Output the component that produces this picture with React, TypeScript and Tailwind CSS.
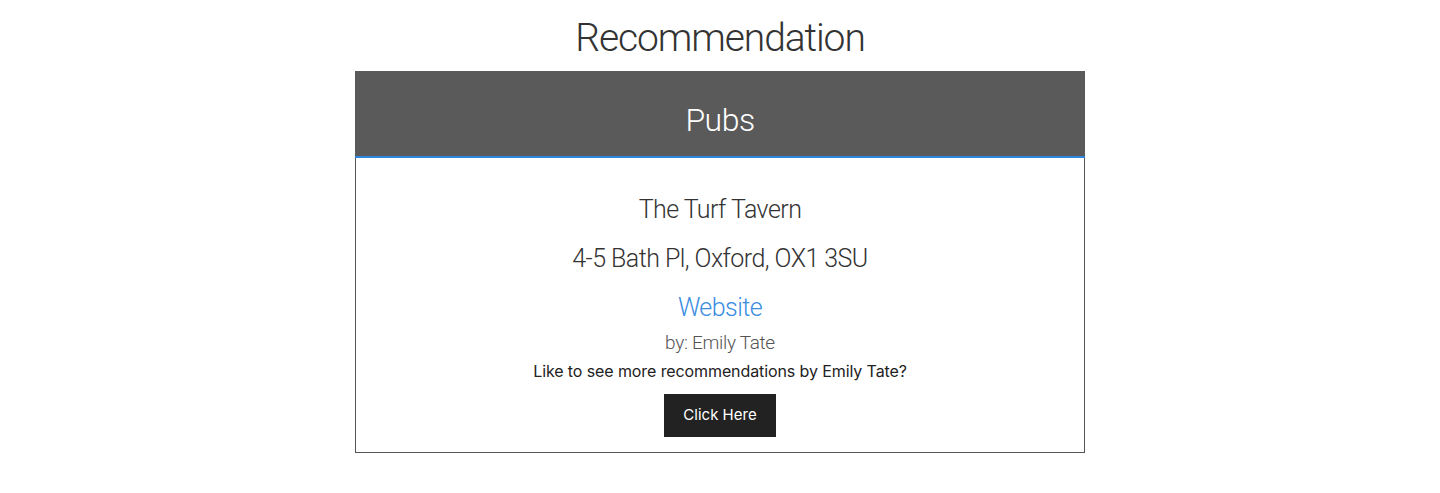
import React from "react";

export default function App() {
  return (
    <div className="w-[1440px] h-[493px] bg-white flex flex-col items-center">
      <h1 className="mt-[15px] text-[39px] leading-[47px] font-light text-[#333] [font-family:Roboto,sans-serif] tracking-[-1.1px]">
        Recommendation
      </h1>
      <div className="mt-[9px] w-[730px] flex flex-col">
        <div className="h-[87px] pt-[12px] bg-[#5a5a5a] border-b-2 border-[#2e86de] flex items-center justify-center">
          <span className="text-[32px] font-light text-white [font-family:Roboto,sans-serif] tracking-[-0.5px]">Pubs</span>
        </div>
        <div className="border border-t-0 border-[#555] flex flex-col items-center pt-[32px] pb-[15px] [font-family:Roboto,sans-serif] font-light text-[#333]">
          <div className="text-[25px] leading-[40px] tracking-[-0.55px]">The Turf Tavern</div>
          <div className="text-[25px] leading-[40px] mt-[9px] tracking-[-0.55px]">4-5 Bath Pl, Oxford, OX1 3SU</div>
          <a className="text-[25px] leading-[40px] mt-[9px] text-[#3b8de0] tracking-[-0.55px]" href="#">Website</a>
          <div className="text-[19px] leading-[30px] text-[#555] tracking-[-0.3px]">by: Emily Tate</div>
          <div className="text-[16px] leading-[26px] font-normal text-[#222] [font-family:Inter,sans-serif] tracking-[-0.1px]">
            Like to see more recommendations by Emily Tate?
          </div>
          <button className="mt-[10px] w-[112px] h-[43px] bg-[#222] text-white text-[15px] font-normal [font-family:Inter,sans-serif]">
            Click Here
          </button>
        </div>
      </div>
    </div>
  );
}
